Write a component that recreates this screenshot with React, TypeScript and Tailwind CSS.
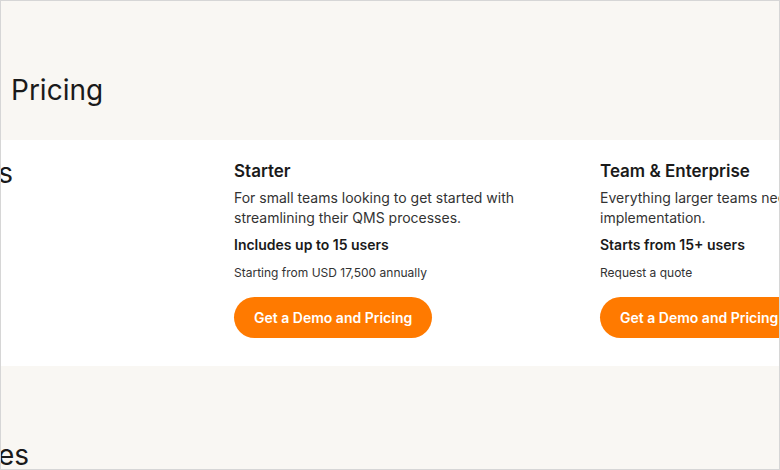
const plans = [
  {
    name: "Starter",
    blurb: "For small teams looking to get started with streamlining their QMS processes.",
    seats: "Includes up to 15 users",
    price: "Starting from USD 17,500 annually",
  },
  {
    name: "Team & Enterprise",
    blurb: "Everything larger teams need for a successful implementation.",
    seats: "Starts from 15+ users",
    price: "Request a quote",
  },
];

function PlanCard({ plan }: { plan: (typeof plans)[number] }) {
  return (
    <div className="flex w-[366px] shrink-0 flex-col items-start pt-[19px]">
      <h3 className="text-[17px] font-semibold leading-6 text-[#1a1a1a]">{plan.name}</h3>
      <p className="mt-[5px] w-[330px] text-[14px] leading-5 text-[#333]">{plan.blurb}</p>
      <p className="mt-[7px] text-[14px] font-semibold leading-5 text-[#1a1a1a]">{plan.seats}</p>
      <p className="mt-[10px] text-[12px] leading-4 text-[#333]">{plan.price}</p>
      <button
        type="button"
        className="mt-[16px] h-[41px] shrink-0 whitespace-nowrap rounded-full bg-[#ff7a00] px-[20px] text-[14px] font-semibold text-white"
      >
        Get a Demo and Pricing
      </button>
    </div>
  );
}

export default function App() {
  return (
    <div
      className="h-[470px] w-[780px] overflow-hidden border border-[#d6d6d6] bg-[#f9f7f3]"
      style={{ fontFamily: "Inter, 'Noto Sans', sans-serif" }}
    >
      <div className="flex h-[139px] items-start pl-[10px] pt-[71px]">
        <h2 className="text-[28px] leading-9 text-[#1a1a1a]">Pricing</h2>
      </div>

      <section className="flex h-[226px] bg-white">
        <div className="flex w-[233px] shrink-0 justify-end pt-[15px] pr-[221px]">
          <h3 className="shrink-0 whitespace-nowrap text-[28px] leading-9 text-[#1a1a1a]">Plans</h3>
        </div>
        {plans.map((plan) => (
          <PlanCard key={plan.name} plan={plan} />
        ))}
      </section>

      <div className="flex w-[28px] justify-end pt-[71px]">
        <h2 className="shrink-0 whitespace-nowrap text-[28px] leading-9 text-[#1a1a1a]">Features</h2>
      </div>
    </div>
  );
}
